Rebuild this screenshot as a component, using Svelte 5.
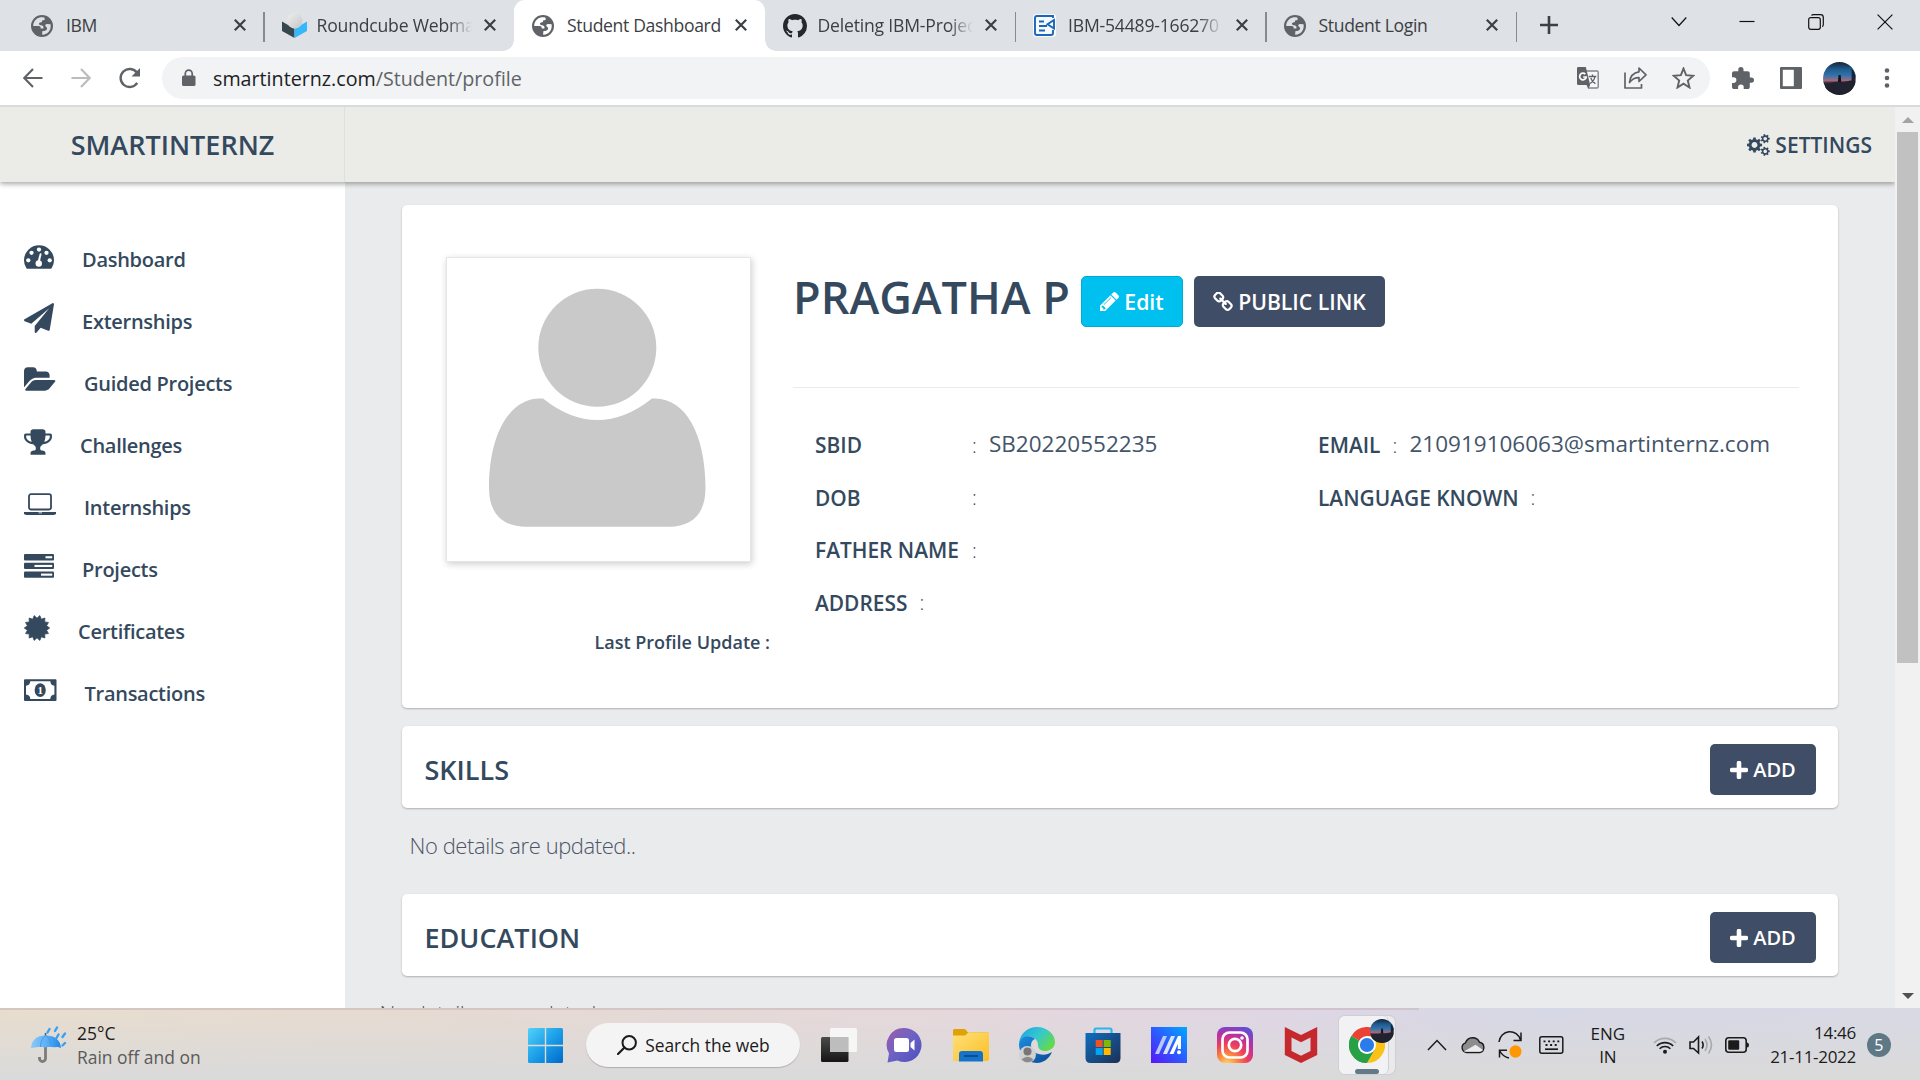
<script>
  const tabs = [
    { title: 'IBM', icon: 'globe' },
    { title: 'Roundcube Webma', icon: 'cube', fade: true },
    { title: 'Student Dashboard', icon: 'globe', active: true },
    { title: 'Deleting IBM-Projec', icon: 'github', fade: true },
    { title: 'IBM-54489-166270', icon: 'sheet', fade: true },
    { title: 'Student Login', icon: 'globe' }
  ];

  const menu = [
    { label: 'Dashboard', icon: 'gauge', w: 30 },
    { label: 'Externships', icon: 'plane', w: 30 },
    { label: 'Guided Projects', icon: 'folder', w: 32 },
    { label: 'Challenges', icon: 'trophy', w: 28 },
    { label: 'Internships', icon: 'laptop', w: 32 },
    { label: 'Projects', icon: 'tasks', w: 30 },
    { label: 'Certificates', icon: 'seal', w: 26 },
    { label: 'Transactions', icon: 'money', w: 32.5 }
  ];

  const leftFields = [
    { label: 'SBID', value: 'SB20220552235', wide: true },
    { label: 'DOB', value: '', wide: true },
    { label: 'FATHER NAME', value: '', wide: true },
    { label: 'ADDRESS', value: '' }
  ];
  const rightFields = [
    { label: 'EMAIL', value: '210919106063@smartinternz.com' },
    { label: 'LANGUAGE KNOWN', value: '' }
  ];

  // Polygon points of a toothed disc
  function burst(cx, cy, outer, inner, n) {
    const pts = [];
    for (let i = 0; i < n * 2; i++) {
      const r = i % 2 ? inner : outer;
      const a = (Math.PI * i) / n - Math.PI / 2 + Math.PI / n;
      pts.push((cx + r * Math.cos(a)).toFixed(2) + ',' + (cy + r * Math.sin(a)).toFixed(2));
    }
    return pts.join(' ');
  }

  // Closed outline of a gear with n square teeth
  function gear(cx, cy, outer, inner, n) {
    let d = '';
    for (let i = 0; i < n; i++) {
      const a = (2 * Math.PI * i) / n;
      const s = Math.PI / n;
      const p = [[inner, a - s * 0.62], [outer, a - s * 0.42], [outer, a + s * 0.42], [inner, a + s * 0.62]];
      for (const [r, t] of p) {
        d += (d ? 'L' : 'M') + (cx + r * Math.cos(t)).toFixed(2) + ' ' + (cy + r * Math.sin(t)).toFixed(2);
      }
    }
    return d + 'Z';
  }
</script>

{#snippet avatar(id)}
  <svg class="pic" viewBox="0 0 34 34">
    <defs>
      <linearGradient id="{id}-sky" x1="0" y1="0" x2="0" y2="1">
        <stop offset="0" stop-color="#16243c" />
        <stop offset=".22" stop-color="#1f5c8e" />
        <stop offset=".42" stop-color="#3474ac" />
        <stop offset=".56" stop-color="#a9677c" />
        <stop offset=".64" stop-color="#262735" />
        <stop offset="1" stop-color="#1b1d29" />
      </linearGradient>
    </defs>
    <circle cx="17" cy="17" r="17" fill="url(#{id}-sky)" />
    <path d="M2 24Q12 20 17 20.500T33 18Q34 25 28 30T8 31Q2 28 2 24Z" fill="#20222f" />
    <path d="M20 1Q31 4 33.500 14L32 22L29.500 19V6z" fill="#1b2434" />
    <path d="M16 13.500h2.200l.6 7h-3.400z" fill="#10131d" />
  </svg>
{/snippet}

{#snippet menuIcon(kind, w)}
  {#if kind === 'gauge'}
    <svg width={w} height="30" viewBox="0 0 1792 1792">
      <path fill="currentColor" d="M1792 1152q0 261-141 483-19 29-54 29H195q-35 0-54-29Q0 1413 0 1152a896 896 0 0 1 1792 0Z" />
      <g fill="#fff">
        <circle cx="256" cy="1152" r="128" /><circle cx="448" cy="704" r="128" /><circle cx="896" cy="512" r="128" />
        <circle cx="1344" cy="704" r="128" /><circle cx="1536" cy="1152" r="128" /><circle cx="882" cy="1344" r="192" />
        <path d="M820 1210L935 770Q955 720 1005 732Q1055 750 1045 805L945 1230Z" />
      </g>
    </svg>
  {:else if kind === 'plane'}
    <svg width={w} height="30" viewBox="0 0 1792 1792"><path fill="currentColor" d="M1764 11q33 24 27 64l-256 1536q-5 29-32 45-14 8-31 8-11 0-24-5l-453-185-242 295q-18 23-49 23-13 0-22-4-19-7-30.500-23.500t-11.500-36.500v-349l864-1059-1069 925-395-162q-37-14-40-55-2-40 32-59l1664-960q15-9 32-9 20 0 36 11z" /></svg>
  {:else if kind === 'folder'}
    <svg width={w} height="30" viewBox="64 0 1920 1792" preserveAspectRatio="xMinYMid"><path fill="currentColor" d="M1943 952q0 31-31 66l-336 396q-43 51-120.500 86.500t-143.500 35.500h-1088q-34 0-60.500-13t-26.500-43q0-31 31-66l336-396q43-51 120.500-86.500t143.500-35.500h1088q34 0 60.500 13t26.500 43zm-343-344v160h-832q-94 0-197 47.500t-164 119.500l-337 396-5 6q0-4-.5-12.500t-.5-12.500v-960q0-92 66-158t158-66h320q92 0 158 66t66 158v32h544q92 0 158 66t66 158z" /></svg>
  {:else if kind === 'trophy'}
    <svg width={w} height="30" viewBox="64 0 1664 1792"><path fill="currentColor" d="M522 883q-74-162-74-371h-256v96q0 78 94.500 162t235.500 113zm1078-275v-96h-256q0 209-74 371 141-29 235.500-113t94.500-162zm128-128v128q0 71-41.500 143t-112 130-173 97.500-215.500 44.500q-42 54-95 95-38 34-52.500 72.500t-14.500 89.500q0 54 30.500 91t97.500 37q75 0 133.500 45.500t58.500 114.500v64q0 14-9 23t-23 9h-832q-14 0-23-9t-9-23v-64q0-69 58.500-114.500t133.500-45.500q67 0 97.500-37t30.500-91q0-51-14.500-89.500t-52.500-72.500q-53-41-95-95-113-5-215.500-44.500t-173-97.500-112-130-41.500-143v-128q0-40 28-68t68-28h288v-96q0-66 47-113t113-47h576q66 0 113 47t47 113v96h288q40 0 68 28t28 68z" /></svg>
  {:else if kind === 'laptop'}
    <svg width={w} height="30" viewBox="0 0 32 30">
      <rect x="5" y="5.200" width="22" height="15.300" rx="2" fill="none" stroke="currentColor" stroke-width="1.800" />
      <path fill="currentColor" d="M0 23h32v1.200q0 1.800-2.600 1.800H2.600Q0 26 0 24.200z" />
      <rect x="14.500" y="23.500" width="3.500" height=".8" fill="#fff" />
    </svg>
  {:else if kind === 'tasks'}
    <svg width={w} height="30" viewBox="0 0 30 30">
      <g fill="currentColor"><rect y="3" width="30" height="6.400" rx="1" /><rect y="11.700" width="30" height="6.400" rx="1" /><rect y="20.400" width="30" height="6.400" rx="1" /></g>
      <g fill="#fff"><rect x="21.500" y="5.200" width="6.700" height="2.100" /><rect x="10.500" y="13.900" width="17.700" height="2.100" /><rect x="17" y="22.600" width="11.200" height="2.100" /></g>
    </svg>
  {:else if kind === 'seal'}
    <svg width={w} height="30" viewBox="0 0 26 30"><polygon fill="currentColor" stroke="currentColor" stroke-width=".8" stroke-linejoin="round" points={burst(13, 15, 12.7, 9.8, 14)} /></svg>
  {:else}
    <svg width={w} height="30" viewBox="0 0 32.5 30">
      <path fill="currentColor" fill-rule="evenodd" d="M1 4.300h30.500q1 0 1 1V25q0 1-1 1H1q-1 0-1-1V5.300q0-1 1-1zM6.300 6.300Q6 10.500 2 10.800v8.800Q6 20 6.300 23.900h20Q26.500 20 30.400 19.600v-8.800Q26.500 10.500 26.300 6.300z" />
      <ellipse cx="16.200" cy="15.100" rx="5.600" ry="6.900" fill="currentColor" />
      <text class="coin" x="16" y="19.300">1</text>
    </svg>
  {/if}
{/snippet}

<div class="screen">
  <div class="tabstrip">
    {#each tabs as tab}
      <div class="tab {tab.active ? 'active' : ''} {tab.icon === 'cube' ? 'plain' : ''}">
        <span class="favicon">
          {#if tab.icon === 'globe'}
            <svg width="22" height="22" viewBox="0 0 22 22">
              <circle cx="11" cy="11" r="11" fill="#5f6368" />
              <path class="sea" d="M9.500 2.300C5.300 3 2.200 6.700 2.200 11l5.600.1c1.700.1 1.900 1.200 1.900 2.300h2.700c.4-1.600-.2-2.500-1.300-3l-2.300-.5c-1.300-.6-1-2 .2-2.400l2-.4V5.600l2.600-.6V2.700C12 2.200 10.700 2.100 9.500 2.300z" />
              <path class="sea" d="M19.600 9.300l-3.600-.3c-1.300 0-2.300 1-1.500 2.300l1.500 1.500c.4 1.900-1 3-2.700 3.100l-1.800.2-.5 3.500c5 .5 9.500-3.800 8.600-10.300z" />
            </svg>
          {:else if tab.icon === 'cube'}
            <svg width="25" height="25" viewBox="0 0 25 25">
              <defs><linearGradient id="ball" x1="0" y1="0" x2="1" y2="1"><stop offset="0" stop-color="#efefef" /><stop offset="1" stop-color="#c6c6c6" /></linearGradient></defs>
              <path d="M0 8.500l12.500 7.200V25L0 18z" fill="#37474f" /><path d="M25 8.500l-12.500 7.200V25L25 18z" fill="#35b8fb" />
              <circle cx="12.800" cy="7.800" r="7.700" fill="url(#ball)" />
            </svg>
          {:else if tab.icon === 'github'}
            <svg width="24" height="24" viewBox="0 0 16 16"><path fill="#24292f" d="M8 0C3.580 0 0 3.580 0 8c0 3.540 2.290 6.530 5.470 7.590.4.070.55-.170.55-.380 0-.190-.010-.820-.010-1.490-2.010.370-2.530-.490-2.690-.940-.090-.230-.480-.940-.820-1.130-.280-.150-.680-.520-.010-.530.630-.010 1.080.580 1.230.820.720 1.210 1.870.870 2.330.660.070-.520.280-.870.510-1.070-1.780-.200-3.640-.890-3.640-3.950 0-.870.310-1.590.820-2.150-.080-.200-.360-1.020.080-2.120 0 0 .670-.210 2.200.820.640-.180 1.320-.270 2-.270s1.360.090 2 .270c1.530-1.040 2.200-.820 2.200-.820.440 1.100.160 1.920.080 2.120.510.560.820 1.270.820 2.150 0 3.070-1.870 3.750-3.650 3.950.290.250.540.730.540 1.480 0 1.070-.010 1.930-.010 2.200 0 .210.150.460.550.380A8.010 8.010 0 0 0 16 8c0-4.420-3.580-8-8-8z" /></svg>
          {:else}
            <svg width="24" height="24" viewBox="0 0 24 24">
              <rect x="0" y="0" width="23" height="23" rx="3" fill="#f6f9fc" />
              <path d="M20 16v3q0 2-2 2H4q-2 0-2-2V4q0-2 2-2h16v2M6 7.500h5M6 12h8M6 16.500h6M21 6v8.500l-6.500-4.200z" fill="none" stroke="#1a66b8" stroke-width="1.900" />
            </svg>
          {/if}
        </span>
        <span class="tab-title {tab.fade ? 'fade' : ''}">{tab.title}</span>
        <svg class="tab-close" width="12" height="12" viewBox="0 0 12 12"><path d="M.8.8l10.400 10.400M11.200.8L.8 11.200" stroke="#3c4043" stroke-width="2.200" /></svg>
      </div>
    {/each}
    <svg class="new-tab" width="18" height="18" viewBox="0 0 18 18"><path d="M9 0v18M0 9h18" stroke="#3c4043" stroke-width="2.600" /></svg>
    <div class="window-buttons">
      <svg width="16" height="16" viewBox="0 0 16 16"><path d="M.7 3.500L8 11.500l7.300-8" /></svg>
      <svg width="16" height="16" viewBox="0 0 16 16"><path d="M.5 7.500h15" /></svg>
      <svg width="16" height="16" viewBox="0 0 16 16"><rect x=".7" y="3.700" width="11.600" height="11.600" rx="2" /><path d="M3.500 1.500Q4 .7 5.500.7h7q2.800 0 2.800 2.800v7q0 1.500-1 2.200" /></svg>
      <svg width="16" height="16" viewBox="0 0 16 16"><path d="M.6.6l14.800 14.800M15.400.6L.6 15.400" /></svg>
    </div>
  </div>

  <div class="toolbar">
    <svg class="nav" width="20" height="20" viewBox="0 0 20 20"><path d="M19.500 10H1.600M10 1L1.300 10l8.700 9" stroke="#5f6368" /></svg>
    <svg class="nav" width="20" height="20" viewBox="0 0 20 20"><path d="M.5 10h17.900M10 1l8.700 9L10 19" stroke="#babcbe" /></svg>
    <svg class="nav" width="22" height="22" viewBox="0 0 22 22"><path d="M18.200 15.800A9 9 0 1 1 18 5.800" stroke="#5f6368" stroke-width="2.400" /><path d="M21 1v8.500h-8.500z" fill="#5f6368" /></svg>
    <div class="omnibox">
      <svg class="lock" width="14" height="18" viewBox="0 0 14 18"><rect y="6.500" width="13.500" height="10.500" rx="1.600" fill="#5f6368" /><path d="M3.300 7.500V4.500a3.450 3.450 0 0 1 6.900 0v3" fill="none" stroke="#5f6368" stroke-width="1.700" /></svg>
      <span class="url"><b>smartinternz.com</b>/Student/profile</span>
      <div class="omni-icons">
        <svg width="22" height="22" viewBox="0 0 22 22">
          <path d="M9 4h11q1.200 0 1.200 1.200v14.600q0 1.200-1.200 1.200h-8.500z" fill="#f6f7f8" stroke="#80868b" stroke-width="1.400" />
          <path d="M1.300 0h7.500l4.400 18H1.300Q0 18 0 16.700V1.300Q0 0 1.300 0z" fill="#5f6368" /><path d="M9.500 18h3.700l-1.800 3.500z" fill="#5f6368" />
          <path d="M8.300 7.200A3.300 3.300 0 1 0 9.200 10H6.200" fill="none" stroke="#fff" stroke-width="1.700" />
          <path d="M11.700 9.500h7.600M15.500 7.500v2M18 9.500q-.8 4.500-5 7M13.800 11q1.200 4 4.600 5.700" fill="none" stroke="#5f6368" stroke-width="1.300" />
        </svg>
        <svg width="23" height="22" viewBox="0 0 23 22"><path d="M1 5.500V21h16.500v-4M15 1l7 6.800-7 6.700v-3.800Q9.500 10.500 5.500 15.500 6.500 6 15 4.800z" fill="none" stroke="#5f6368" stroke-width="1.700" stroke-linejoin="round" /></svg>
        <svg width="23" height="22" viewBox="0 0 23 22"><path d="M11.500 1.500l2.600 6.700 7.200.6-5.500 4.700 1.700 7-6-3.800-6 3.800 1.700-7L1.700 8.800l7.200-.6z" fill="none" stroke="#5f6368" stroke-width="1.900" /></svg>
      </div>
    </div>
    <svg class="puzzle" width="22" height="22" viewBox="2 1 21 21"><path fill="#5f6368" d="M20.500 11H19V7c0-1.100-.9-2-2-2h-4V3.500a2.500 2.500 0 0 0-5 0V5H4c-1.100 0-2 .9-2 2v3.800h1.500a2.700 2.700 0 0 1 0 5.400H2V20c0 1.100.9 2 2 2h3.800v-1.500a2.700 2.700 0 0 1 5.400 0V22H17c1.100 0 2-.9 2-2v-4h1.500a2.500 2.500 0 0 0 0-5z" /></svg>
    <svg class="panel-icon" width="22" height="22" viewBox="0 0 22 22"><rect width="22" height="22" rx="1" fill="#5f6368" /><rect x="2.800" y="2.800" width="11" height="16.400" fill="#fff" /></svg>
    <span class="profile-pic">{@render avatar('me')}</span>
    <svg class="dots" width="6" height="20" viewBox="0 0 6 20"><circle cx="3" cy="2.500" r="2.300" fill="#5f6368" /><circle cx="3" cy="10" r="2.300" fill="#5f6368" /><circle cx="3" cy="17.500" r="2.300" fill="#5f6368" /></svg>
  </div>

  <div class="viewport">
    <div class="page">
      <header>
        <div class="brand">SMARTINTERNZ</div>
        <div class="settings">
          <svg width="23" height="22" viewBox="0 0 23 22" fill="currentColor" fill-rule="evenodd">
            <path d="{gear(7.5, 11, 7.7, 5.8, 8)}M7.500 8.100a2.900 2.900 0 1 0 .01 0z" />
            <path d="{gear(18.2, 4.7, 4.6, 3.4, 7)}M18.200 2.900a1.800 1.800 0 1 0 .01 0z" />
            <path d="{gear(18.2, 17.3, 4.6, 3.4, 7)}M18.200 15.500a1.800 1.800 0 1 0 .01 0z" />
          </svg>
          <span>SETTINGS</span>
        </div>
      </header>
      <div class="body">
        <nav>
          {#each menu as item}
            <div class="menu-item">
              <span class="menu-icon">{@render menuIcon(item.icon, item.w)}</span>
              <span>{item.label}</span>
            </div>
          {/each}
        </nav>
        <main>
          <section class="card profile">
            <div class="photo-col">
              <div class="photo">
                <svg width="303" height="303" viewBox="447 258 303 303" fill="#c9c9c9">
                  <circle cx="597.300" cy="347.700" r="59" />
                  <path d="M543 398.500Q570 420 597.300 420Q625 420 652 398.500C684 396 705.500 432 705.500 488C705.500 514 692 526.700 669 526.700H526C503 526.700 489 514 489 488C489 432 511 396 543 398.500Z" />
                </svg>
              </div>
              <div class="updated">Last Profile Update :</div>
            </div>
            <div class="info">
              <div class="title-row">
                <h1>PRAGATHA P</h1>
                <button class="btn edit">
                  <svg width="19" height="19" viewBox="128 149 1515 1515" fill="currentColor"><path d="M491 1536l91-91-235-235-91 91v107h128v128h107zm523-928q0-22-22-22-10 0-17 7l-542 542q-7 7-7 17 0 22 22 22 10 0 17-7l542-542q7-7 7-17zm-54-192l416 416-832 832h-416v-416zm683 96q0 53-37 90l-166 166-416-416 166-165q36-38 90-38 53 0 91 38l235 234q37 39 37 91z" /></svg>
                  <span>Edit</span>
                </button>
                <button class="btn public">
                  <svg width="20" height="20" viewBox="64 64 1664 1664" fill="currentColor"><path d="M1520 1216q0-40-28-68l-208-208q-28-28-68-28-42 0-72 32 3 3 19 18.500t21.500 21.500 15 19 13 25.500 3.500 27.500q0 40-28 68t-68 28q-15 0-27.500-3.500t-25.500-13-19-15-21.500-21.500-18.500-19q-33 31-33 73 0 40 28 68l206 207q27 27 68 27 40 0 68-26l147-146q28-28 28-67zm-703-705q0-40-28-68l-206-207q-28-28-68-28-39 0-68 27l-147 146q-28 28-28 67 0 40 28 68l208 208q27 27 68 27 42 0 72-31-3-3-19-18.500t-21.500-21.500-15-19-13-25.500-3.500-27.500q0-40 28-68t68-28q15 0 27.500 3.500t25.500 13 19 15 21.500 21.500 18.500 19q33-31 33-73zm895 705q0 120-85 203l-147 146q-83 83-203 83-121 0-204-85l-206-207q-83-83-83-203 0-123 88-209l-88-88q-86 88-208 88-120 0-204-84l-208-208q-84-84-84-204t85-203l147-146q83-83 203-83 121 0 204 85l206 207q83 83 83 203 0 123-88 209l88 88q86-88 208-88 120 0 204 84l208 208q84 84 84 204z" /></svg>
                  <span>PUBLIC LINK</span>
                </button>
              </div>
              <div class="fields">
                {#each [leftFields, rightFields] as column}
                  <div class="field-col">
                    {#each column as f}
                      <div class="field">
                        <span class="field-label {f.wide ? 'wide' : ''}">{f.label}</span>
                        <span class="colon">:</span>
                        <span class="value">{f.value}</span>
                      </div>
                    {/each}
                  </div>
                {/each}
              </div>
            </div>
          </section>

          {#each ['SKILLS', 'EDUCATION'] as name}
            <section class="card strip">
              <h2>{name}</h2>
              <button class="btn add">
                <svg width="18" height="18" viewBox="0 0 18 18"><path d="M9 2v14M2 9h14" stroke="#fff" stroke-width="4.600" stroke-linecap="round" /></svg>
                <span>ADD</span>
              </button>
            </section>
            <p class={name === 'EDUCATION' ? 'empty outdented' : 'empty'}>No details are updated..</p>
          {/each}
        </main>
      </div>
    </div>
    <div class="scrollbar">
      <svg width="12" height="6" viewBox="0 0 12 6"><path d="M0 6L6 0l6 6z" fill="#a3a3a3" /></svg>
      <div class="thumb"></div>
      <svg width="12" height="6" viewBox="0 0 12 6"><path d="M0 0l6 6 6-6z" fill="#505050" /></svg>
    </div>
  </div>

  <div class="taskbar">
    <div class="weather">
      <svg width="36" height="38" viewBox="0 0 36 38">
        <defs><linearGradient id="umb" x1="0" x2="1"><stop offset="0" stop-color="#8cc8f8" /><stop offset=".5" stop-color="#5fb1f6" /><stop offset="1" stop-color="#1f86e6" /></linearGradient></defs>
        <path d="M14.500 21v11.500a3 3 0 0 1-6 0V31" fill="none" stroke="#7c7c7c" stroke-width="2.800" />
        <path d="M14.500 7v3" stroke="#555" stroke-width="1.500" />
        <path d="M0 22Q1 9.500 14.800 9.500T30 22l-3-1-4 .3-4-.6-4.500.8-5-.8-4 .6z" fill="url(#umb)" />
        <path d="M9.500 21Q9.500 13 14.800 9.500 20 13 20 21" fill="none" stroke="#3b98ec" stroke-width=".9" />
        <path d="M18.500 3l-2 3.500M26 1.500l-2 3.500M27.500 8.500l-2 3.500M34 7.500l-2.500 3.500M34 17l-2.500 2.500" stroke="#3aa0f5" stroke-width="2.400" stroke-linecap="round" />
      </svg>
      <div class="weather-text"><span>25°C</span><span class="dim">Rain off and on</span></div>
    </div>

    <div class="apps">
      <svg width="35" height="35" viewBox="0 0 35 35">
        <defs><linearGradient id="win" x1="0" y1="0" x2="1" y2="1"><stop offset="0" stop-color="#52d2fa" /><stop offset=".5" stop-color="#1c9fe8" /><stop offset="1" stop-color="#0069cb" /></linearGradient></defs>
        <path d="M1.500 0H16.800V16.800H0V1.500Q0 0 1.500 0zM18.200 0H33.500Q35 0 35 1.500V16.800H18.200zM0 18.200H16.800V35H1.500Q0 35 0 33.500zM18.200 18.200H35V33.500Q35 35 33.500 35H18.200z" fill="url(#win)" />
      </svg>
      <div class="search">
        <svg width="20" height="20" viewBox="0 0 20 20"><circle cx="12.200" cy="7.800" r="6.700" fill="none" stroke="#1b1b1b" stroke-width="2" /><path d="M7.500 12.500L1 19" stroke="#1b1b1b" stroke-width="2.200" stroke-linecap="round" /></svg>
        <span>Search the web</span>
      </div>
      <svg class="task-view" width="36" height="36" viewBox="0 0 36 36">
        <defs><linearGradient id="tv" x1="0" y1="0" x2="0" y2="1"><stop offset="0" stop-color="#4b4b4b" /><stop offset="1" stop-color="#151515" /></linearGradient></defs>
        <rect y="10" width="27.500" height="25" rx="1.500" fill="url(#tv)" /><rect x="9" y="1" width="27" height="24" rx="1.500" fill="#fafafa" fill-opacity=".85" /><rect x="9" y="10" width="18.500" height="15" fill="#bdbdbd" />
      </svg>
      <svg width="36" height="36" viewBox="0 0 36 36">
        <defs><linearGradient id="chat" x1="0" y1="0" x2="1" y2="1"><stop offset="0" stop-color="#a05ba8" /><stop offset=".45" stop-color="#6f63c4" /><stop offset="1" stop-color="#4a4fbf" /></linearGradient></defs>
        <path d="M18.500 1a17 17 0 1 1-7 32.500L1.500 35.500l1.500-9A17 17 0 0 1 18.500 1z" fill="url(#chat)" />
        <rect x="8" y="11" width="15" height="14" rx="2.500" fill="#fff" /><path d="M24.500 16l4-3.500v11l-4-3.500z" fill="#fff" />
      </svg>
      <svg width="36" height="36" viewBox="0 0 36 36">
        <defs><linearGradient id="fold" x1="0" y1="0" x2="1" y2="1"><stop offset="0" stop-color="#ffe07a" /><stop offset="1" stop-color="#fbbf24" /></linearGradient></defs>
        <path d="M0 3.500Q0 2 1.500 2h10.500l3 3.500h19.500Q36 5.500 36 7v6H0z" fill="#e0a106" /><path d="M0 8.500h12l3.500-3H36v26.500q0 2-2 2H0z" fill="url(#fold)" />
        <path d="M6 34.500V27q0-3 3-3h18q3 0 3 3v7.500z" fill="#1574c9" /><path d="M11 29h14" stroke="#0b4d8f" stroke-width="2" />
      </svg>
      <svg width="36" height="36" viewBox="0 0 36 36">
        <defs>
          <linearGradient id="eg1" x1="0" y1="0" x2="1" y2=".6"><stop offset="0" stop-color="#1f9fe0" /><stop offset=".55" stop-color="#34c9cf" /><stop offset="1" stop-color="#63d94c" /></linearGradient>
          <linearGradient id="eg2" x1="0" y1="0" x2="1" y2="1"><stop offset="0" stop-color="#1b8fe0" /><stop offset="1" stop-color="#0b4a94" /></linearGradient>
        </defs>
        <path d="M18 0C8 0 1 7 0 16c3-6 10-8 15-5 3 2 4 4 4 7 0 4 3 6 8 6 5-.5 9-4 9-9C36 7 28 0 18 0z" fill="url(#eg1)" />
        <path d="M0 17C1 9 11 7 16 12c-6 2-6 14 6 15.500 4 .5 8-.5 11-2.500-3 7-9 11-15 11C7 36 0 27 0 17z" fill="url(#eg2)" />
        <circle cx="8.500" cy="27.500" r="8.500" fill="#d1d1d1" /><circle cx="8.500" cy="24.500" r="4" fill="#777" /><path d="M2.500 32.500Q8.500 27 14.500 32.500 8.500 38 2.500 32.500z" fill="#8a8a8a" />
      </svg>
      <svg width="36" height="36" viewBox="0 0 36 36">
        <defs><linearGradient id="store" x1="0" y1="0" x2="1" y2="1"><stop offset="0" stop-color="#0f6fc0" /><stop offset="1" stop-color="#1d2f55" /></linearGradient></defs>
        <path d="M9.500 8V3q0-1.500 1.500-1.500h14Q26.500 1.500 26.500 3v5" fill="none" stroke="#2cb6f0" stroke-width="2.200" />
        <path d="M.5 6H35.500V31q0 5-5 5h-25q-5 0-5-5z" fill="url(#store)" />
        <path d="M10.700 13h7v7h-7z" fill="#f25022" /><path d="M18.700 13h7v7h-7z" fill="#7fba00" /><path d="M10.700 21h7v7h-7z" fill="#00a4ef" /><path d="M18.700 21h7v7h-7z" fill="#ffb900" />
      </svg>
      <svg width="36" height="36" viewBox="0 0 36 36">
        <defs><linearGradient id="asus" x1="0" y1="1" x2="1" y2="0"><stop offset="0" stop-color="#5a16f5" /><stop offset=".5" stop-color="#2b5cff" /><stop offset="1" stop-color="#00a8ff" /></linearGradient></defs>
        <rect width="36" height="36" fill="url(#asus)" />
        <path d="M4 27L12 9h4L8 27z" fill="#b9c8ff" /><path d="M12 27L20 9h4l-8 18z" fill="#d9e2ff" /><path d="M18.500 27L27 9h3v13h-3.200v-5L22.500 27z" fill="#fff" /><circle cx="28" cy="25.200" r="2" fill="#fff" />
      </svg>
      <svg width="36" height="36" viewBox="0 0 36 36">
        <defs><radialGradient id="insta" cx=".28" cy="1.050" r="1.150"><stop offset="0" stop-color="#ffdb73" /><stop offset=".25" stop-color="#fb8b3c" /><stop offset=".5" stop-color="#ee3e5c" /><stop offset=".75" stop-color="#b92fa6" /><stop offset="1" stop-color="#5b50d6" /></radialGradient></defs>
        <rect width="36" height="36" rx="8" fill="url(#insta)" /><rect x="5.500" y="5.500" width="25" height="25" rx="7" fill="none" stroke="#fff" stroke-width="2.700" /><circle cx="18" cy="18" r="6.200" fill="none" stroke="#fff" stroke-width="2.700" /><circle cx="25" cy="11" r="1.800" fill="#fff" />
      </svg>
      <svg width="36" height="36" viewBox="0 0 36 36"><path d="M1.800 0L18 8 34.200 0V28L18 36 1.800 28zM8.500 10.500V24L18 28.700 27.500 24V10.500L18 15.200z" fill="#c5292d" fill-rule="evenodd" /></svg>
      <div class="chrome-tile">
        <div class="tile-face">
          <svg width="36" height="36" viewBox="0 0 36 36">
            <path d="M18 18L2.400 9A18 18 0 0 1 33.600 9H18z" fill="#ea4335" /><path d="M18 18L18 36A18 18 0 0 1 2.400 9z" fill="#28a045" />
            <path d="M18 9H33.600A18 18 0 0 1 18 36L25.800 22.500z" fill="#fbc116" /><path d="M2.400 9L10.200 22.500Q14 28 25.800 22.500L18 36A18 18 0 0 1 2.400 9z" fill="#28a045" />
            <circle cx="18" cy="18" r="9" fill="#fff" /><circle cx="18" cy="18" r="7.100" fill="#2b7bea" />
          </svg>
        </div>
        <span class="tile-badge">{@render avatar('tile')}</span>
        <span class="tile-bar"></span>
      </div>
    </div>

    <div class="tray">
      <svg class="t-chev" width="20" height="12" viewBox="0 0 20 12"><path d="M1 11l9-9.500L19 11" fill="none" stroke="#1b1b1b" stroke-width="1.500" /></svg>
      <svg class="t-cloud" width="26" height="18" viewBox="0 0 26 18"><path d="M6.500 16.500A5 5 0 0 1 5.500 6.800 7.500 7.500 0 0 1 19.500 6.300 5.200 5.200 0 0 1 19.800 16.500z" fill="#8d8d8d" stroke="#1b1b1b" stroke-width="1.400" /><path d="M4 15.500L15.500 8.800 23 14q-1.200 1.800-3.200 1.800H6.500q-1.500 0-2.500-.3z" fill="#ececec" /></svg>
      <svg class="t-sync" width="26" height="30" viewBox="0 0 26 30"><path d="M2 12A11 11.500 0 0 1 23.500 10M24 2.500v8h-7.500M2.500 27.500v-7.200h7.500M2.500 20.500Q6 27 12 28" fill="none" stroke="#1b1b1b" stroke-width="1.500" /><ellipse cx="18.500" cy="21.500" rx="6" ry="6.200" fill="#ff9800" /></svg>
      <svg class="t-key" width="25" height="18" viewBox="0 0 25 18"><rect x=".8" y=".8" width="23" height="16.400" rx="2" fill="none" stroke="#1b1b1b" stroke-width="1.500" /><path d="M4.500 5.300h16.500M6.500 9h12" stroke="#1b1b1b" stroke-width="1.800" stroke-dasharray="2 2.600" /><path d="M6 13.200h13" stroke="#1b1b1b" stroke-width="1.700" /></svg>
      <div class="lang"><span>ENG</span><span>IN</span></div>
      <svg class="t-wifi" width="24" height="18" viewBox="0 0 24 18" fill="none" stroke-width="1.600"><path d="M1 7a15.500 15.500 0 0 1 22 0" stroke="#a9a9ac" /><path d="M3.800 10a11.600 11.600 0 0 1 16.400 0M6.600 12.700a7.600 7.600 0 0 1 10.800 0" stroke="#1b1b1b" /><circle cx="12" cy="15.700" r="2" fill="#1b1b1b" /></svg>
      <svg class="t-vol" width="25" height="20" viewBox="0 0 25 20" fill="none" stroke-width="1.600"><path d="M1 7v6.500h3.500L9.500 18V2L4.500 7z" stroke="#1b1b1b" /><path d="M13 6.500q2.300 3.500 0 7" stroke="#1b1b1b" /><path d="M16 4q4 6 0 12M19.500 1.500q6 8.500 0 17" stroke="#a9a9ac" /></svg>
      <svg class="t-bat" width="25" height="16" viewBox="0 0 25 16"><rect x=".8" y=".8" width="20.400" height="14.400" rx="3" fill="none" stroke="#1b1b1b" stroke-width="1.600" /><rect x="3.200" y="3.300" width="11" height="9.400" rx="1" fill="#1b1b1b" /><path d="M22 5.500q2 0 2 2.500t-2 2.500z" fill="#1b1b1b" /></svg>
      <div class="clock"><span>14:46</span><span>21-11-2022</span></div>
      <div class="count">5</div>
    </div>
  </div>
</div>

<style>
  :global(body) { margin: 0; overflow: hidden; }
  .screen { width: 1920px; height: 1080px; display: flex; flex-direction: column; overflow: hidden; font-family: 'Open Sans', 'Noto Sans', sans-serif; background: #fff; }
  .screen :global(svg) { display: block; flex: none; }
  span, h1, h2, p, div { white-space: nowrap; }

  /* Tab strip */
  .tabstrip { height: 51px; flex: none; background: #dee1e6; display: flex; align-items: center; padding-left: 13px; box-sizing: border-box; }
  .tab { position: relative; width: 250.500px; height: 51px; flex: none; display: flex; align-items: center; box-sizing: border-box; padding-left: 18px; }
  .tab:not(.active):not(.plain)::after { content: ''; width: 1.500px; height: 30px; background: #868b90; position: absolute; right: -1px; top: 12px; }
  .active { background: #fff; border-radius: 11px 11px 0 0; z-index: 1; }
  .active::before, .active::after { content: ''; position: absolute; bottom: 0; width: 11px; height: 11px; }
  .active::before { left: -11px; background: radial-gradient(circle at 0 0, transparent 10.500px, #fff 11px); }
  .active::after { right: -11px; background: radial-gradient(circle at 100% 0, transparent 10.500px, #fff 11px); }
  .favicon { width: 25px; margin-right: 10px; }
  .sea { fill: #dee1e6; }
  .active .sea { fill: #fff; }
  .tab-title { width: 155px; font-size: 17.600px; letter-spacing: -.35px; line-height: 26px; padding-bottom: 1px; color: #3c4043; }
  .fade { letter-spacing: -.2px; -webkit-mask-image: linear-gradient(90deg, #000 84%, transparent 100%); mask-image: linear-gradient(90deg, #000 84%, transparent 100%); }
  .tab-close { margin-left: 12.500px; margin-bottom: 1px; }
  .new-tab { margin-left: 24px; margin-bottom: 1px; }
  .window-buttons { margin-left: auto; padding-right: 27px; padding-bottom: 8px; display: flex; gap: 53px; }
  .window-buttons svg { fill: none; stroke: #111; stroke-width: 1.200; }
  .window-buttons svg:first-child { margin-right: -1px; }

  /* Toolbar */
  .toolbar { height: 54px; flex: none; border-bottom: 2px solid #d8dadd; display: flex; align-items: center; padding-left: 23px; }
  .nav { fill: none; stroke-width: 2.100; margin-right: 28px; }
  .nav:nth-child(3) { margin-right: 21px; }
  .omnibox { width: 1548px; height: 42px; border-radius: 21px; background: #f1f3f4; display: flex; align-items: center; box-sizing: border-box; padding: 0 15.500px 0 20px; }
  .lock { margin-right: 17px; }
  .url { font-size: 19.700px; color: #5f6368; }
  .url b { font-weight: 400; color: #202124; }
  .omni-icons { margin-left: auto; display: flex; gap: 25px; }
  .puzzle { margin-left: 22px; }
  .panel-icon { margin-left: 26px; }
  .profile-pic { width: 33px; height: 33px; margin-left: 21px; }
  .pic { width: 100%; height: 100%; }
  .dots { margin-left: 28px; }

  /* Page */
  .viewport { height: 901px; flex: none; display: flex; overflow: hidden; }
  .page { width: 1895px; color: #34495e; display: flex; flex-direction: column; overflow: hidden; }
  header { height: 75px; flex: none; display: flex; background: #ebece8; box-shadow: 0 2px 5px rgba(0, 0, 0, .35); z-index: 1; }
  .brand { width: 345px; box-sizing: border-box; padding-left: 1px; border-right: 1px solid #dfe0dc; text-align: center; font-size: 27px; font-weight: 600; line-height: 75px; }
  .settings { margin-left: auto; padding-right: 23px; display: flex; align-items: center; gap: 5px; font-size: 21px; font-weight: 600; line-height: 75px; }
  .settings span { padding-top: 2px; }
  .body { height: 826px; flex: none; display: flex; }
  nav { width: 345px; flex: none; background: #fff; padding: 46px 0 0 24px; box-sizing: border-box; }
  .menu-item { height: 62.050px; display: flex; align-items: center; gap: 28px; font-size: 20px; font-weight: 600; letter-spacing: -.27px; }
  .menu-icon { padding-bottom: 6px; }
  .coin { font: bold 11px 'Liberation Serif', serif; fill: #fff; text-anchor: middle; }

  main { flex: 1; background: #eaebed; padding: 23px 57px 0; overflow: hidden; }
  .card { background: #fff; border-radius: 5px; box-shadow: 0 1px 2px rgba(0, 0, 0, .25); box-sizing: border-box; }
  .profile { height: 503px; display: flex; padding: 52px 38px 0 44px; }
  .photo-col { width: 324px; margin-right: 23px; flex: none; }
  .photo { width: 303px; height: 303px; border: 1px solid #e6e6e6; box-shadow: 1px 2px 7px rgba(0, 0, 0, .2); }
  .updated { text-align: right; font-size: 18px; font-weight: 600; line-height: 30px; margin-top: 65px; }
  .info { width: 1006px; flex: none; padding-top: 19px; }
  .title-row { display: flex; height: 111px; border-bottom: 1px solid #ebebeb; align-items: flex-start; }
  h1 { margin: 0; width: 288px; font-size: 45px; font-weight: 600; line-height: 41px; }
  .btn { height: 51px; border: 0; border-radius: 5px; color: #fff; background: #3f4d66; font: 600 20px 'Open Sans', sans-serif; display: flex; align-items: center; justify-content: center; padding: 0; gap: 5px; box-sizing: border-box; }
  .btn span { line-height: 51px; }
  .edit { width: 102px; background: #00c0ef; border: 1px solid #00acd6; margin-right: 11px; font-size: 21.200px; }
  .public { width: 191px; font-size: 21.200px; }
  .add { width: 106px; }
  .add span { padding-bottom: 1px; }
  .fields { display: flex; padding: 31px 0 0 22px; }
  .field-col { width: 503px; flex: none; }
  .field { height: 52.500px; display: flex; align-items: center; }
  .field-label { font-size: 20.900px; font-weight: 600; margin-right: 12px; }
  .wide { width: 145px; }
  .colon { font-size: 20px; font-weight: 300; width: 17px; }
  .value { font-size: 22.500px; font-weight: 400; padding-bottom: 4px; color: #44556a; }
  .strip { height: 82px; margin-top: 18px; display: flex; align-items: center; justify-content: space-between; padding: 0 22px 0 22.500px; }
  h2 { margin: 4px 0 0; font-size: 27px; font-weight: 600; }
  .add { margin-top: 5px; }
  .empty { margin: 0; height: 86px; padding-left: 7.500px; font-size: 22px; font-weight: 300; letter-spacing: -.43px; line-height: 74px; color: #4d5566; box-sizing: border-box; }
  .empty + .strip { margin-top: 0; }
  .outdented { margin-left: -30px; }

  .scrollbar { width: 25px; box-sizing: border-box; background: #f1f1f1; display: flex; flex-direction: column; align-items: center; padding: 10px 0 9px; }
  .thumb { width: 21px; height: 531px; background: #c1c1c1; margin-top: 9px; margin-bottom: auto; }

  /* Taskbar */
  .taskbar { height: 72px; flex: none; box-sizing: border-box; padding-top: 2px; position: relative; display: flex; align-items: center; color: #1b1b1b; background: linear-gradient(180deg, rgba(218, 218, 218, 0) 10%, #dadada 95%), linear-gradient(90deg, #e7ddcf 0%, #e5dad3 25%, #e5d8dc 50%, #dfd6e4 66%, #d7d8e5 80%, #d8d9e3 100%); }
  .taskbar::before { content: ''; position: absolute; left: 0; top: 0; width: 1419px; height: 2px; background: rgba(190, 165, 170, .4); }
  .weather { width: 528px; flex: none; display: flex; align-items: center; padding-left: 31px; gap: 10px; box-sizing: border-box; }
  .weather-text { display: flex; flex-direction: column; font-size: 17.450px; line-height: 24px; }
  .dim { color: #5a5a5a; }
  .apps { display: flex; align-items: center; gap: 30.150px; }
  .search { width: 214px; height: 44px; margin-left: -7px; margin-right: -9px; border-radius: 22px; background: #f5f4f5; box-shadow: 0 1px 1px rgba(0, 0, 0, .2); box-sizing: border-box; padding-left: 31px; display: flex; align-items: center; gap: 8px; font-size: 17.400px; }
  .task-view { margin-right: -1px; }
  .chrome-tile { position: relative; width: 56px; height: 58px; margin-left: -10px; border-radius: 6px; background: #eae9ec; box-shadow: 0 0 0 1px #cfced2; }
  .tile-face { width: 50px; height: 58px; box-sizing: border-box; border-radius: 6px; background: #f2f1f3; border-right: 1px solid #cfced2; padding: 11px 0 0 10px; }
  .tile-badge { position: absolute; left: 31px; top: 3px; width: 24px; height: 24px; }
  .tile-bar { position: absolute; left: 16px; bottom: 0; width: 24px; height: 5px; border-radius: 3px; background: #647b87; }
  .tray { margin-left: 31.500px; display: flex; align-items: center; flex: 1; }
  .t-cloud { margin-left: 13px; }
  .t-sync { margin-left: 11px; }
  .t-key { margin-left: 16px; }
  .lang { margin-left: 23px; width: 42px; display: flex; flex-direction: column; align-items: center; font-size: 17px; line-height: 23px; }
  .t-wifi { margin-left: 24px; }
  .t-vol { margin-left: 12px; }
  .t-bat { margin-left: 11px; }
  .clock { width: 106px; padding-bottom: 1px; display: flex; flex-direction: column; align-items: flex-end; font-size: 17px; letter-spacing: -.3px; line-height: 24px; }
  .count { margin-left: 11px; margin-bottom: 1px; width: 24px; height: 24px; border-radius: 50%; background: #5f7885; color: #fff; font-size: 16px; line-height: 24px; text-align: center; }
</style>
